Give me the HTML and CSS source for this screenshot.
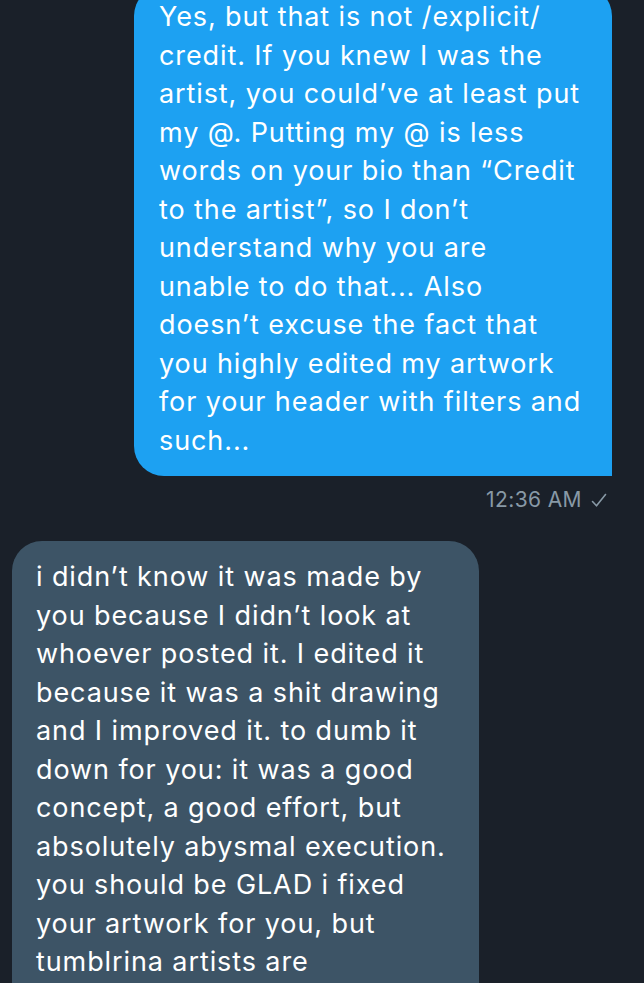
FILE: index.html
```html
<!DOCTYPE html>
<html>
<head>
<meta charset="utf-8">
<link rel="stylesheet" href="styles.css">
</head>
<body>
<div class="thread">
  <div class="msg sent">
    <div class="bubble bubble-sent">Yes, but that is not /explicit/<br>credit. If you knew I was the<br>artist, you could’ve at least put<br>my @. Putting my @ is less<br>words on your bio than “Credit<br>to the artist”, so I don’t<br>understand why you are<br>unable to do that... Also<br>doesn’t excuse the fact that<br>you highly edited my artwork<br>for your header with filters and<br>such...</div>
    <div class="meta">12:36 AM<svg class="check" width="16" height="15" viewBox="0 0 16 15"><path d="M1.5 8.5 L5.5 12.8 L14.5 1.5" fill="none" stroke="#8899a6" stroke-width="1.6" stroke-linecap="round" stroke-linejoin="round"/></svg></div>
  </div>
  <div class="msg received">
    <div class="bubble bubble-received">i didn’t know it was made by<br>you because I didn’t look at<br>whoever posted it. I edited it<br>because it was a shit drawing<br>and I improved it. to dumb it<br>down for you: it was a good<br>concept, a good effort, but<br>absolutely abysmal execution.<br>you should be GLAD i fixed<br>your artwork for you, but<br>tumblrina artists are</div>
  </div>
</div>
</body>
</html>
```
FILE: styles.css
```css
html, body {
  margin: 0;
  padding: 0;
  background: #1a2029;
  height: 100%;
  overflow: hidden;
}
.thread {
  display: flex;
  flex-direction: column;
  font-family: Inter, "Liberation Sans", Arial, sans-serif;
  color: #ffffff;
}
.msg {
  display: flex;
  flex-direction: column;
}
.sent {
  align-items: flex-end;
  padding-right: 32px;
}
.received {
  align-items: flex-start;
  padding-left: 12px;
  margin-top: 26px;
}
.bubble {
  font-size: 27px;
  line-height: 38.5px;
  letter-spacing: 0.9px;
  white-space: nowrap;
  box-sizing: border-box;
}
.bubble-sent {
  background: #1da1f2;
  width: 478px;
  margin-top: -14px;
  padding: 12px 20px 16px 25px;
  border-radius: 30px 30px 0 30px;
}
.bubble-received {
  background: #3d5466;
  width: 467px;
  padding: 17px 20px 40px 24px;
  border-radius: 30px 30px 30px 0;
}
.meta {
  display: flex;
  align-items: center;
  gap: 9px;
  margin-top: 9px;
  font-size: 21px;
  line-height: 30px;
  letter-spacing: 0.4px;
  color: #8899a6;
  padding-right: 5px;
}
.check {
  display: block;
}
```
